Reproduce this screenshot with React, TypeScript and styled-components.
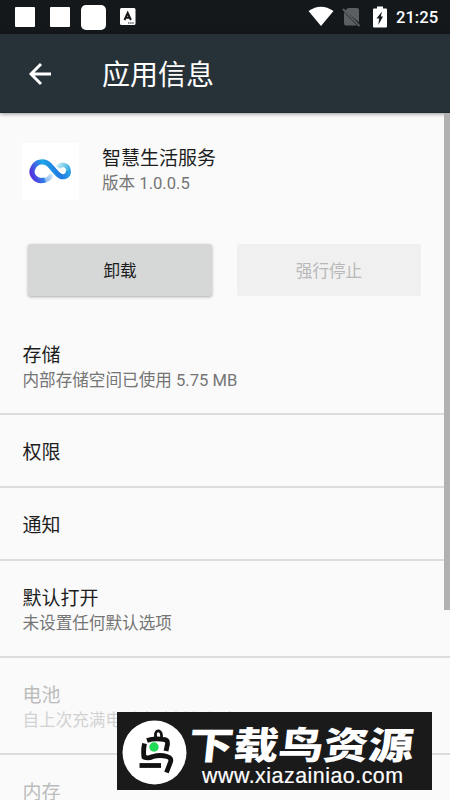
import React from "react";
import styled, { createGlobalStyle } from "styled-components";

const GlobalStyle = createGlobalStyle`
  * { box-sizing: border-box; }
  body {
    margin: 0;
    background: #fafafa;
    font-family: Roboto, "Noto Sans CJK SC", sans-serif;
    overflow: hidden;
  }
`;

const Screen = styled.div`
  position: relative;
  width: 450px;
  height: 800px;
  overflow: hidden;
  background: #fafafa;
`;

const StatusBar = styled.header`
  display: flex;
  align-items: center;
  justify-content: space-between;
  height: 34px;
  padding: 0 12px 0 15px;
  background: #14181b;
  color: #fff;
`;

const StatusGroup = styled.div`
  display: flex;
  align-items: center;
  height: 34px;
`;

const Notice = styled.span<{ $size: number; $radius: number; $gap: number }>`
  width: ${(p) => p.$size}px;
  height: ${(p) => p.$size}px;
  margin-right: ${(p) => p.$gap}px;
  border-radius: ${(p) => p.$radius}px;
  background: #fff;
`;

const Clock = styled.span`
  margin-left: 8px;
  font-size: 16.6px;
  font-weight: 500;
  line-height: 35px;
  width: 42px;
  white-space: nowrap;
`;

const TitleBar = styled.div`
  position: relative;
  display: flex;
  align-items: center;
  height: 79px;
  padding: 2px 0 0 28px;
  background: #273238;
  border-bottom: 1px solid #202a2f;
  box-shadow: 0 1px 4px rgba(0, 0, 0, 0.4);
  color: #fff;
`;

const Title = styled.h1`
  margin: 0 0 0 50px;
  padding-top: 3px;
  font-size: 28px;
  font-weight: 400;
  line-height: 40px;
`;

const AppHeader = styled.section`
  display: flex;
  height: 131px;
  padding: 30px 0 0 22px;
`;

const AppIcon = styled.div`
  width: 57px;
  height: 57px;
  margin-right: 23px;
  background: #fff;
`;

const Lines = styled.div`
  display: flex;
  flex-direction: column;
  padding-top: 3px;
`;

const Primary = styled.div<{ $muted?: boolean }>`
  font-size: 19px;
  line-height: 25px;
  color: ${(p) => (p.$muted ? "#bcbcbc" : "#1d1d1d")};
  white-space: nowrap;
`;

const Secondary = styled.div<{ $muted?: boolean }>`
  font-size: 16.6px;
  line-height: 25px;
  color: ${(p) => (p.$muted ? "#d2d2d2" : "#757575")};
  white-space: nowrap;
`;

const Actions = styled.div`
  display: grid;
  grid-template-columns: 184px 184px;
  column-gap: 25px;
  height: 74px;
  padding-left: 28px;
`;

const ActionButton = styled.button`
  height: 52px;
  padding: 3px 0 0;
  border: 0;
  border-radius: 3px;
  background: #d6d7d7;
  box-shadow: 0 1px 3px rgba(0, 0, 0, 0.32);
  color: #1d1d1d;
  font: 400 16.6px/49px Roboto, "Noto Sans CJK SC", sans-serif;

  &:disabled {
    background: #f0f0f0;
    box-shadow: none;
    color: #b8b8b8;
  }
`;

const Row = styled.div<{ $height: number }>`
  display: flex;
  flex-direction: column;
  justify-content: center;
  height: ${(p) => p.$height}px;
  padding: ${(p) => (p.$height < 80 ? 3 : 5)}px 0 0 22.5px;
  border-bottom: 2px solid #dcdcdc;
`;

const ScrollThumb = styled.div`
  position: absolute;
  top: 113px;
  right: 0;
  width: 6px;
  height: 497px;
  background: #b1b1b1;
`;

const Watermark = styled.aside`
  position: absolute;
  left: 117px;
  top: 712px;
  display: flex;
  width: 315px;
  height: 78px;
  padding: 8px 0 0 5px;
  background: #1a1a1a;
  color: #fff;
`;

const BrandText = styled.div`
  display: flex;
  flex-direction: column;
`;

const BrandName = styled.div`
  height: 42px;
  font: 900 37.500px/45px "Noto Sans CJK SC", sans-serif;
  white-space: nowrap;
  transform: scaleX(1.2) skewX(-5deg);
  transform-origin: 0 100%;
`;

const BrandUrl = styled.div`
  padding-left: 15px;
  font: 400 21.4px/28px "Liberation Sans", sans-serif;
  letter-spacing: 0.5px;
  white-space: nowrap;
  -webkit-text-stroke: 0.2px #fff;
`;

const rows = [
  { title: "存储", summary: "内部存储空间已使用 5.75 MB", height: 97 },
  { title: "权限", height: 73 },
  { title: "通知", height: 73 },
  { title: "默认打开", summary: "未设置任何默认选项", height: 97 },
  { title: "电池", summary: "自上次充满电后未消耗任何电量", height: 97, muted: true },
  { title: "内存", height: 73, muted: true },
];

const LetterIcon = () => (
  <svg width="16" height="18" viewBox="0 0 16 18">
    <rect width="15.5" height="17" rx="1.5" fill="#fff" />
    <path d="M4.500 12L7.700 5L10.900 12M5.600 9.700H9.800" fill="none" stroke="#14181b" strokeWidth="2" />
    <path d="M8 15H14" stroke="#14181b" strokeWidth="1.2" strokeDasharray="1.5 .6" />
  </svg>
);

const StatusIcons = () => (
  <svg width="80" height="34" viewBox="309 0 80 34">
    <path d="M309.500 11Q322 2.500 334.500 11L322 26Z" fill="#fff" />
    <path d="M349 8H358Q360 8 360 10V22.500L346 10.500ZM345 12L358 25.500H347Q345 25.500 345 23.500Z" fill="#5c5f61" />
    <path d="M344 9L360.500 26" stroke="#5c5f61" strokeWidth="1.800" />
    <path d="M378 6.500H384V8.500H387Q388 8.500 388 9.500V26.500Q388 27.500 387 27.500H375Q374 27.500 374 26.500V9.500Q374 8.500 375 8.500H378Z" fill="#fff" />
    <path d="M383 11.500L377.500 18.500H380.200L379.300 25L384 16.500H381.800Z" fill="#14181b" />
  </svg>
);

const BackArrow = () => (
  <svg width="24" height="24" viewBox="0 0 24 24">
    <path d="M23 12H3M13 2L3 12L13 22" fill="none" stroke="#fff" strokeWidth="2.900" />
  </svg>
);

const LoopLogo = () => (
  <svg width="57" height="57" viewBox="0 0 57 57">
    <defs>
      <linearGradient id="loop" gradientUnits="userSpaceOnUse" x1="9" y1="37" x2="46" y2="24">
        <stop offset="0" stopColor="#5a24dc" />
        <stop offset=".2" stopColor="#3f5fe6" />
        <stop offset=".42" stopColor="#1da6e6" />
        <stop offset=".75" stopColor="#2178e4" />
        <stop offset="1" stopColor="#2ba4e4" />
      </linearGradient>
      <linearGradient id="tail" gradientUnits="userSpaceOnUse" x1="18" y1="38" x2="31" y2="31">
        <stop offset="0" stopColor="#6422d8" />
        <stop offset=".35" stopColor="#8fb8ee" />
        <stop offset="1" stopColor="#d5eef9" />
      </linearGradient>
      <linearGradient id="tip" gradientUnits="userSpaceOnUse" x1="36" y1="22" x2="48" y2="28">
        <stop offset="0" stopColor="#bdeaf0" />
        <stop offset="1" stopColor="#2ba4e4" />
      </linearGradient>
    </defs>
    <path d="M20 37.500C25 37.500 28 35.500 29.500 31.500" fill="none" stroke="url(#tail)" strokeWidth="4.600" />
    <path d="M36 24.500C39 20 46.500 21.500 46.500 28" fill="none" stroke="url(#tip)" strokeWidth="4.600" />
    <path d="M23 37C13 40 8 30.500 11 25C14 18 22.500 17 27.500 22L35 30.500C40 36 46.500 34 46.500 28" fill="none" stroke="url(#loop)" strokeWidth="5.200" />
  </svg>
);

const BirdLogo = () => (
  <svg width="65" height="65" viewBox="0 0 65 65">
    <circle cx="32.500" cy="32.500" r="32" fill="#fff" />
    <g fill="none" stroke="#111" strokeWidth="4.800">
      <path d="M33.500 18V14Q34 10.500 37 11Q40 12 39.500 18" strokeWidth="2.800" />
      <path d="M25 20.500Q32 18 42 19.500Q46 20 45.500 24L44 31" />
      <path d="M22.500 23.500Q21 31 22 37Q26 39 31 36.500Q38 34.500 45 36.500Q50 38 48.500 42L44.500 52.500" />
      <path d="M17.500 45.500H39" />
    </g>
    <circle cx="32" cy="27" r="4.700" fill="#20d957" />
  </svg>
);

export default function App() {
  return (
    <Screen>
      <GlobalStyle />
      <StatusBar>
        <StatusGroup>
          <Notice $size={20} $radius={1} $gap={15} />
          <Notice $size={20} $radius={1} $gap={11} />
          <Notice $size={25} $radius={5} $gap={14} />
          <LetterIcon />
        </StatusGroup>
        <StatusGroup>
          <StatusIcons />
          <Clock>21:25</Clock>
        </StatusGroup>
      </StatusBar>
      <TitleBar>
        <BackArrow />
        <Title>应用信息</Title>
      </TitleBar>
      <AppHeader>
        <AppIcon>
          <LoopLogo />
        </AppIcon>
        <Lines>
          <Primary>智慧生活服务</Primary>
          <Secondary>版本 1.0.0.5</Secondary>
        </Lines>
      </AppHeader>
      <Actions>
        <ActionButton>卸载</ActionButton>
        <ActionButton disabled>强行停止</ActionButton>
      </Actions>
      {rows.map((row) => (
        <Row key={row.title} $height={row.height}>
          <Primary $muted={row.muted}>{row.title}</Primary>
          {row.summary && <Secondary $muted={row.muted}>{row.summary}</Secondary>}
        </Row>
      ))}
      <ScrollThumb />
      <Watermark>
        <BirdLogo />
        <BrandText>
          <BrandName>下载鸟资源</BrandName>
          <BrandUrl>www.xiazainiao.com</BrandUrl>
        </BrandText>
      </Watermark>
    </Screen>
  );
}
